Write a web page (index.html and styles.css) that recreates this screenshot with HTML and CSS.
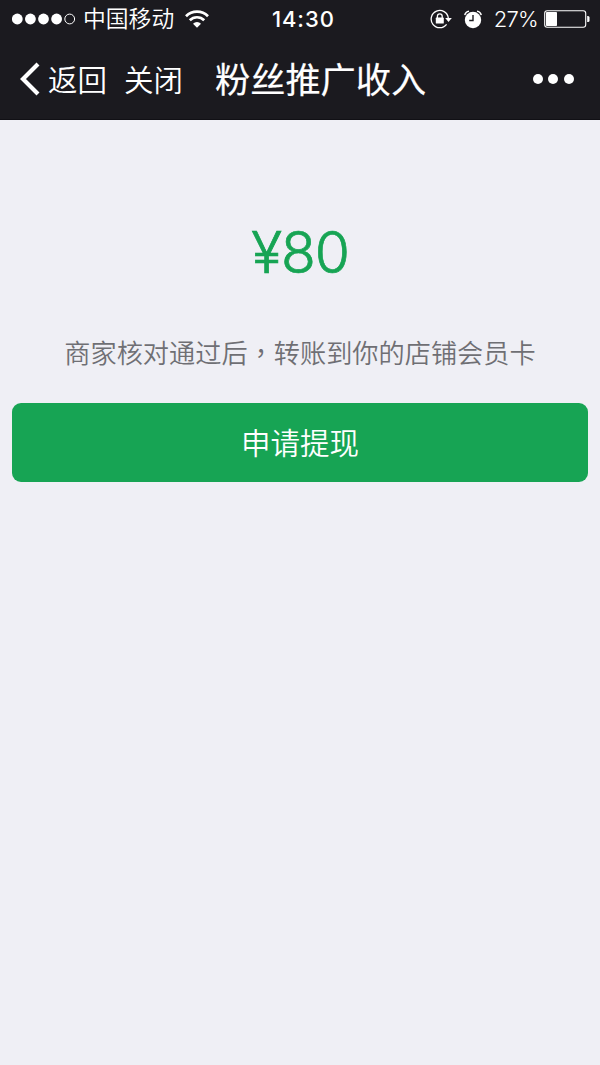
FILE: index.html
```html
<!DOCTYPE html>
<html lang="zh-CN">
<head>
<meta charset="utf-8">
<title>粉丝推广收入</title>
<link rel="stylesheet" href="styles.css">
</head>
<body>
<header class="header">
  <div class="status">
    <div class="carrier">
      <svg class="signal" width="64" height="12" viewBox="0 0 64 12"><g fill="#fff"><circle cx="5.3" cy="6" r="5.4"/><circle cx="18.4" cy="6" r="5.4"/><circle cx="31.5" cy="6" r="5.4"/><circle cx="44.6" cy="6" r="5.4"/></g><circle cx="57.7" cy="6" r="4.9" fill="none" stroke="#fff"/></svg>
      <span class="carrier-name">中国移动</span>
      <svg class="wifi" width="24" height="18" viewBox="0 0 24 18"><g fill="none" stroke="#fff" stroke-width="2.7"><path d="M1 6.2a15.5 15.5 0 0 1 22 0"/><path d="M4.8 10.3a10 10 0 0 1 14.4 0"/></g><path d="M8 13.7a5.7 5.7 0 0 1 8 0l-4 4z" fill="#fff"/></svg>
    </div>
    <span class="time">14:30</span>
    <div class="indicators">
      <svg class="lock" width="22" height="20" viewBox="0 0 22 20"><path d="M16.6 15.3A8.6 8.6 0 1 1 18.3 9" fill="none" stroke="#fff" stroke-width="1.3"/><path d="M15.2 9h6.6l-3.3 4z" fill="#fff"/><rect x="5.8" y="8.6" width="8" height="6" rx=".6" fill="#fff"/><path d="M7.4 9V7.2a2.4 2.4 0 0 1 4.8 0V9" fill="none" stroke="#fff" stroke-width="1.3"/></svg>
      <svg class="alarm" width="18" height="19" viewBox="0 0 18 19"><circle cx="9" cy="10" r="8.2" fill="#fff"/><path d="M.8 5.2A5 5 0 0 1 5 1.2M17.2 5.2A5 5 0 0 0 13 1.2" stroke="#fff" stroke-width="1.5" fill="none"/><path d="M9 5v5.5H5.2" fill="none" stroke="#1b1a1f" stroke-width="1.4"/></svg>
      <span class="percent">27%</span>
      <svg class="battery" width="46" height="18" viewBox="0 0 46 18"><rect x=".7" y=".7" width="41" height="16.6" rx="2.5" fill="none" stroke="#fff" stroke-width="1.1"/><rect x="2" y="2" width="11" height="14" rx=".8" fill="#fff"/><path d="M43.2 6h.8q1.5 0 1.5 1.5v3q0 1.5-1.5 1.5h-.8z" fill="#fff"/></svg>
    </div>
  </div>
  <nav class="nav">
    <svg class="chevron" width="22" height="34" viewBox="0 0 22 34"><path d="M19 2L4 17l15 15" fill="none" stroke="#fff" stroke-width="4.2"/></svg>
    <span class="back">返回</span>
    <span class="close">关闭</span>
    <h1 class="title">粉丝推广收入</h1>
    <svg class="more" width="42" height="10" viewBox="0 0 42 10" fill="#fff"><circle cx="5" cy="5" r="5"/><circle cx="20" cy="5" r="5"/><circle cx="36" cy="5" r="5"/></svg>
  </nav>
</header>
<main class="content">
  <div class="amount">¥80</div>
  <p class="note">商家核对通过后<span class="comma" lang="zh-TW">，</span>转账到你的店铺会员卡</p>
  <button class="withdraw">申请提现</button>
</main>
</body>
</html>
```
FILE: styles.css
```css
* { box-sizing: border-box; }
body { margin: 0; min-height: 1065px; background: #efeff5; font-family: Inter, "Noto Sans CJK SC", sans-serif; }
.header { height: 120px; background: #1b1a1f; border-bottom: 1px solid #111015; color: #fff; }
.status { height: 38px; display: grid; grid-template-columns: 272px 1fr auto; align-items: center; padding-right: 10px; font-size: 22px; line-height: 36px; }
.carrier { display: flex; align-items: center; padding-left: 12px; }
.carrier-name { margin-left: 7px; padding-bottom: 2px; font: 350 22.8px/36px "Noto Sans CJK SC", sans-serif; }
.wifi { margin-left: 11px; }
.time { font-weight: 500; letter-spacing: .9px; }
.indicators { display: flex; align-items: center; }
.alarm { margin-left: 12px; }
.percent { margin-left: 12px; font-size: 22px; font-weight: 350; letter-spacing: -.7px; }
.battery { margin-left: 6px; }
.nav { height: 82px; display: flex; align-items: center; padding: 0 25px 0 19px; font: 350 29.5px/80px "Noto Sans CJK SC", sans-serif; }
.back, .close { padding-bottom: 3px; }
.back { margin-left: 7px; }
.close { margin-left: 17px; }
.title { margin: 0 0 0 32px; padding-bottom: 3px; font-size: 35.2px; font-weight: 400; -webkit-text-stroke: .2px #fff; }
.more { margin-left: auto; }
.content { padding: 93px 12px 0; text-align: center; }
.amount { height: 80px; line-height: 80px; font-size: 57px; font-weight: 350; letter-spacing: -1.1px; color: #17a454; -webkit-text-stroke: .7px #17a454; }
.note { margin: 39px 0 0; height: 40px; font: 350 26.2px/40px "Noto Sans CJK SC", sans-serif; color: #6f6f74; }
.comma { font-family: "Noto Sans CJK TC", sans-serif; }
.withdraw { display: block; width: 100%; height: 79px; margin-top: 31px; padding: 0 0 4px; border: 0; border-radius: 9px; background: #17a454; color: #fff; font: 350 29.5px/74px "Noto Sans CJK SC", sans-serif; }
```
